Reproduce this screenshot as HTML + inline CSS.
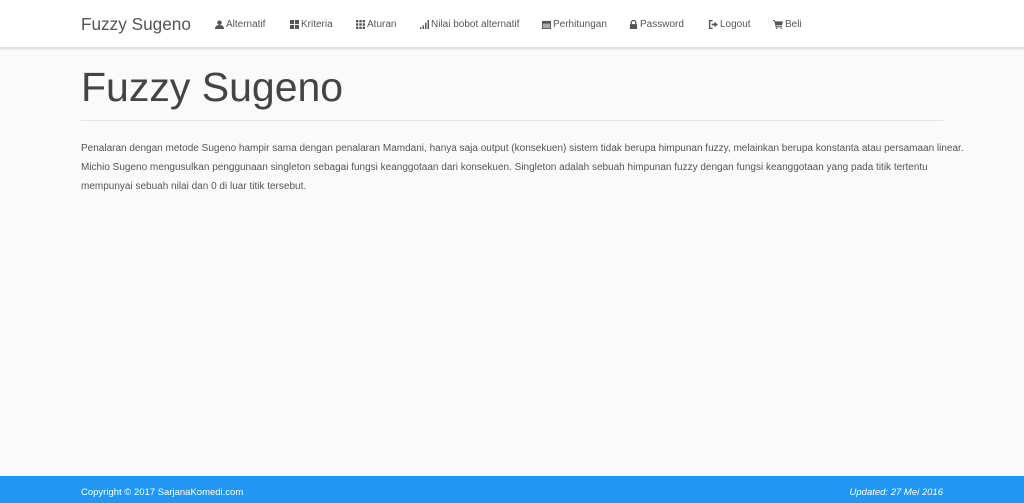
<!DOCTYPE html>
<html><head><meta charset="utf-8"><style>
*{margin:0;padding:0;box-sizing:border-box}
body{width:1024px;height:503px;overflow:hidden;background:#fafafa;font-family:"Liberation Sans",sans-serif;position:relative;color:#555}
.nav{position:absolute;left:0;top:0;width:1024px;height:49px;background:#fff;border-bottom:2px solid #e3e3e3;box-shadow:0 1px 2px rgba(0,0,0,.06)}
.brand{position:absolute;left:81px;top:14px;font-size:17.2px;color:#555}
.item{position:absolute;top:19px;font-size:10px;color:#555;display:flex;align-items:center;gap:2px;white-space:nowrap}
.item svg{fill:#555}
h1{position:absolute;left:81px;top:64px;font-size:41px;font-weight:normal;color:#444}
.hr{position:absolute;left:81px;top:120px;width:862px;border-top:1px solid #e5e5e5}
p{position:absolute;left:81px;top:139px;width:892px;font-size:10px;line-height:19px;color:#555}
.foot{position:absolute;left:0;top:476px;width:1024px;height:27px;background:#2196f3;color:#fff;font-size:9.5px}
.foot .l{position:absolute;left:81px;top:11px}
.foot .r{position:absolute;right:81px;top:11px;font-style:italic}
</style></head><body>
<div class="nav">
<div class="brand">Fuzzy Sugeno</div>
<div class="item" style="left:215px"><svg width="9" height="9" viewBox="0 0 10 10"><circle cx="5" cy="3" r="2.5"/><path d="M0 10 Q0 5.5 5 5.5 Q10 5.5 10 10Z"/></svg>Alternatif</div>
<div class="item" style="left:290px"><svg width="9" height="9" viewBox="0 0 10 10"><rect x="0" y="0" width="4.5" height="4.5"/><rect x="5.5" y="0" width="4.5" height="4.5"/><rect x="0" y="5.5" width="4.5" height="4.5"/><rect x="5.5" y="5.5" width="4.5" height="4.5"/></svg>Kriteria</div>
<div class="item" style="left:356px"><svg width="9" height="9" viewBox="0 0 10 10"><rect x="0" y="0" width="2.6" height="2.6"/><rect x="3.7" y="0" width="2.6" height="2.6"/><rect x="7.4" y="0" width="2.6" height="2.6"/><rect x="0" y="3.7" width="2.6" height="2.6"/><rect x="3.7" y="3.7" width="2.6" height="2.6"/><rect x="7.4" y="3.7" width="2.6" height="2.6"/><rect x="0" y="7.4" width="2.6" height="2.6"/><rect x="3.7" y="7.4" width="2.6" height="2.6"/><rect x="7.4" y="7.4" width="2.6" height="2.6"/></svg>Aturan</div>
<div class="item" style="left:420px"><svg width="9" height="9" viewBox="0 0 10 10"><rect x="0" y="8" width="1.6" height="2"/><rect x="2.8" y="6" width="1.6" height="4"/><rect x="5.6" y="3" width="1.6" height="7"/><rect x="8.4" y="0" width="1.6" height="10"/></svg>Nilai bobot alternatif</div>
<div class="item" style="left:542px"><svg width="9" height="9" viewBox="0 0 10 10"><rect x="0" y="1" width="10" height="9"/><rect x="1" y="4" width="8" height="5" fill="#fff" opacity=".5"/></svg>Perhitungan</div>
<div class="item" style="left:629px"><svg width="9" height="9" viewBox="0 0 10 10"><path d="M2.5 4.5V3a2.5 2.5 0 0 1 5 0v1.5" fill="none" stroke="#555" stroke-width="1.4"/><rect x="1" y="4.5" width="8" height="5.5"/></svg>Password</div>
<div class="item" style="left:708px"><svg width="10" height="9" viewBox="0 0 11 10"><path d="M5 0H1v10h4V8.5H2.5v-7H5z"/><path d="M4 4h3V2l4 3-4 3V6H4z"/></svg>Logout</div>
<div class="item" style="left:773px"><svg width="10" height="9" viewBox="0 0 11 10"><path d="M0 0h2l.5 1.5H11L10 6H3.5L3.8 7H10v1H3L1.3 1H0z"/><circle cx="4" cy="9.2" r=".8"/><circle cx="9" cy="9.2" r=".8"/></svg>Beli</div>
</div>
<h1>Fuzzy Sugeno</h1>
<div class="hr"></div>
<p>Penalaran dengan metode Sugeno hampir sama dengan penalaran Mamdani, hanya saja output (konsekuen) sistem tidak berupa himpunan fuzzy, melainkan berupa konstanta atau persamaan linear.<br>Michio Sugeno mengusulkan penggunaan singleton sebagai fungsi keanggotaan dari konsekuen. Singleton adalah sebuah himpunan fuzzy dengan fungsi keanggotaan yang pada titik tertentu<br>mempunyai sebuah nilai dan 0 di luar titik tersebut.</p>
<div class="foot"><span class="l">Copyright © 2017 SarjanaKomedi.com</span><span class="r">Updated: 27 Mei 2016</span></div>
</body></html>
